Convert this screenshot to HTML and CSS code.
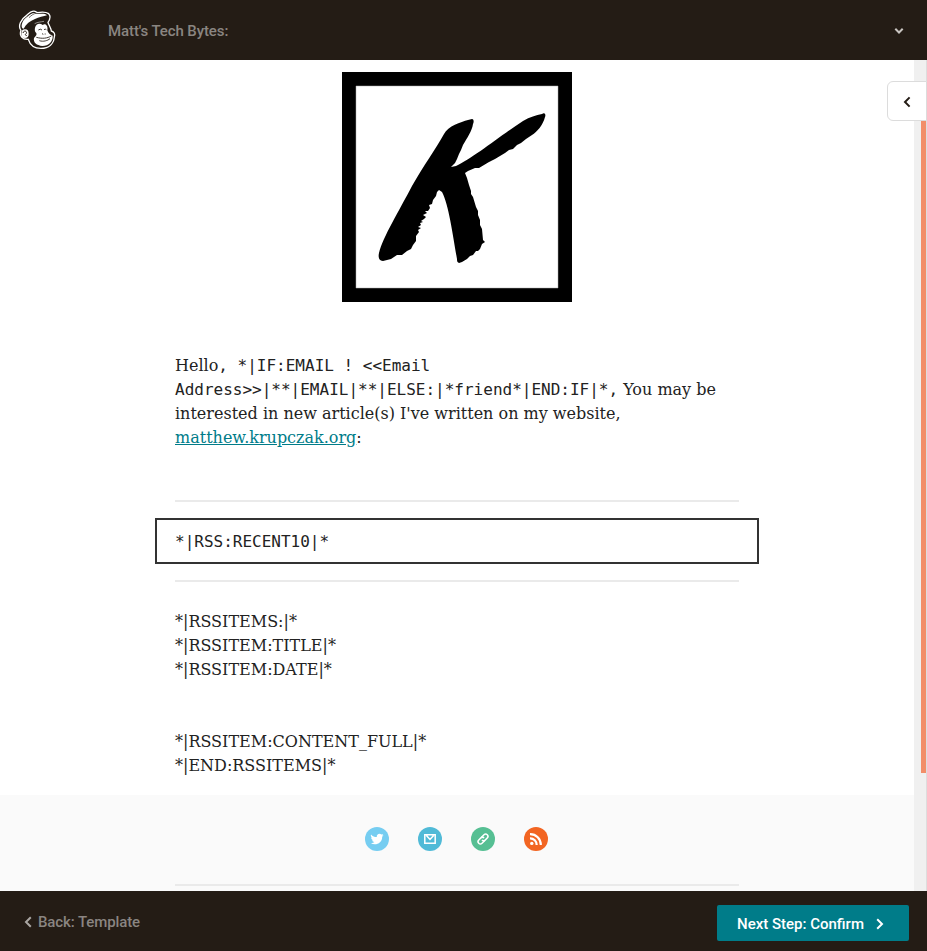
FILE: index.html
```html
<!DOCTYPE html>
<html lang="en">
<head>
<meta charset="utf-8">
<title>Matt's Tech Bytes</title>
<link rel="stylesheet" href="styles.css">
</head>
<body>
<header class="topbar">
  <svg class="logo" width="42" height="44" viewBox="0 0 126 132">
    <path d="M15 67C5 55 14 34 32 22C40 14 49 8 57 10L64 14C76 12 89 11 98 17C105 24 102 34 96 43C98 51 105 59 106 69C115 71 118 79 115 87C113 107 99 121 75 121C56 121 42 111 37 94C22 96 8 84 15 67Z" fill="#241c15" stroke="#fff" stroke-width="4"/>
    <path d="M19 61C13 51 22 33 36 25C44 17 55 12 63 18C75 17 87 15 93 22C83 25 68 27 57 33C42 39 30 48 23 62Z" fill="#fff"/>
    <path d="M39 29C46 22 53 17 60 16" fill="none" stroke="#241c15" stroke-width="2"/>
    <path d="M56 47C65 42 74 42 84 40" fill="none" stroke="#fff" stroke-width="1.5"/>
    <ellipse cx="27" cy="77" rx="11" ry="13" fill="#fff"/>
    <path d="M21 75C23 66 34 69 31 76L28 80L32 84" fill="none" stroke="#241c15" stroke-width="3"/>
    <path d="M57 59C60 46 72 44 80 51C88 45 97 53 94 67C98 78 103 80 110 83C111 101 99 113 79 114C62 112 51 104 54 90C60 83 64 79 60 74C56 70 56 65 57 59Z" fill="#fff"/>
    <path d="M67 66Q73 61 78 66M84 65Q88 62 91 65M78 77L82 79M86 78H89M61 88C80 93 93 91 106 84M70 98C82 102 95 98 102 92" fill="none" stroke="#241c15" stroke-width="2.6"/>
  </svg>
  <span class="campaign">Matt's Tech Bytes:</span>
  <svg class="menu" width="10" height="8" viewBox="0 0 10 8"><path d="M1.3 1.8L5 5.5L8.7 1.8"/></svg>
</header>
<main class="preview">
  <div class="mail">
    <svg class="brand" width="230" height="230" viewBox="0 0 230 230">
      <path fill="#000" d="M0 0H230V230H0Z"/><path fill="#fff" stroke="#aaa" stroke-width=".5" d="M14 14H216V216H14Z"/>
      <path d="M102 62C106 54 119 50 126 48L130 47C132 47 132 50 131 52C130 59 125 66 121 73L119 78L117 82L115 87L113 91L109 95L114 94C130 87 158 64 181 49C188 45 194 43 200 42C203 40 204 43 203 45C201 53 195 60 190 63L184 67L179 71L175 73L171 77L167 78L163 81L158 84L153 87L147 90L142 93L137 96H133L126 99L123 101L125 106L127 113L129 119V122L131 125L134 135L136 139V143L138 148V153L140 157L141 168L143 170L140 172L138 177L136 179H134L131 183L128 184L125 187L120 190L117 191C115 190 115 189 115 187C111 165 107 133 100 120L97 118L95 120L94 124L91 128L90 132L87 133L88 136L86 139H83L85 141L81 143L84 145L82 147L79 149L81 150L78 151L79 153L76 155L79 156L76 158L77 160L74 164V169L71 173L69 177L65 179L60 183H55L49 187L41 189C37 189 36 185 37 181C41 165 57 139 70 114C82 93 93 78 102 62Z"/>
    </svg>
    <p class="intro">Hello<code>, *|IF:EMAIL ! &lt;&lt;Email<br>Address&gt;&gt;|**|EMAIL|**|ELSE:|*friend*|END:IF|*,</code> You may be<br>interested in new article(s) I've written on my website,<br><a href="#">matthew.krupczak.org</a>:</p>
    <hr class="rule">
    <div class="block"><code>*|RSS:RECENT10|*</code></div>
    <hr class="rule">
    <p class="items">*|RSSITEMS:|*<br>*|RSSITEM:TITLE|*<br>*|RSSITEM:DATE|*<br><br><br>*|RSSITEM:CONTENT_FULL|*<br>*|END:RSSITEMS|*</p>
  </div>
  <section class="social">
    <div class="icons">
      <svg width="24" height="24" viewBox="0 0 24 24"><circle cx="12" cy="12" r="12" fill="#76cdf1"/><path fill="#fff" d="M6 7.5C7.7 9.3 9.5 10 11.8 10.1C11.2 7.2 14.7 5.8 16.4 7.6L18.2 7L17.1 8.6L18.5 8.2L17.2 9.7C17.3 16 10.7 19.1 5.8 16.2C7.4 16.3 8.5 15.8 9.4 15.1C8.2 15 7.4 14.3 7.1 13.3H8.2C6.9 12.8 6.2 11.9 6.2 10.6L7.3 10.9C6 9.9 5.5 8.8 6 7.5Z"/></svg>
      <svg width="24" height="24" viewBox="0 0 24 24"><circle cx="12" cy="12" r="12" fill="#50bad7"/><path d="M6.8 7.8H17.2V16.2H6.8ZM8.4 8.5L12 12.5L15.6 8.5" fill="none" stroke="#fff" stroke-width="1.5"/></svg>
      <svg width="24" height="24" viewBox="0 0 24 24"><circle cx="12" cy="12" r="12" fill="#56bf93"/><g transform="rotate(-45 12 12)" fill="none" stroke="#fff" stroke-width="1.5"><path d="M12.2 14.3H8.3A2.3 2.3 0 0 1 8.3 9.7H11.3A2.3 2.3 0 0 1 13.5 12"/><path d="M11.8 9.7H15.7A2.3 2.3 0 0 1 15.7 14.3H12.7A2.3 2.3 0 0 1 10.5 12"/></g></svg>
      <svg width="24" height="24" viewBox="0 0 24 24"><circle cx="12" cy="12" r="12" fill="#f26522"/><circle cx="7.8" cy="16.4" r="1.7" fill="#fff"/><path d="M6 11.3A6.5 6.5 0 0 1 12.7 18M6 7.2A10.6 10.6 0 0 1 16.8 18" fill="none" stroke="#fff" stroke-width="2.2"/></svg>
    </div>
    <hr class="rule">
  </section>
  <div class="gutter"><div class="thumb"></div></div>
  <button class="drawer" aria-label="Open panel"><svg width="8" height="12" viewBox="0 0 8 12"><path d="M6.6 1.4L2 6L6.6 10.6"/></svg></button>
</main>
<footer class="bottombar">
  <a class="back" href="#"><svg width="8" height="12" viewBox="0 0 8 12"><path d="M6.8 1.2L2 6L6.8 10.8"/></svg>Back: Template</a>
  <a class="next" href="#"><span class="label">Next Step: Confirm</span><svg width="8" height="12" viewBox="0 0 8 12"><path d="M1.2 1.2L6 6L1.2 10.8"/></svg></a>
</footer>
</body>
</html>
```
FILE: styles.css
```css
* { box-sizing: border-box; }
body { margin: 0; height: 951px; display: flex; flex-direction: column; overflow: hidden; background: #fff; color: #222; font: 16px/24px "DejaVu Serif", serif; }
svg { display: block; flex: none; }
.topbar { height: 60px; flex: none; display: flex; align-items: center; padding: 0 23px 0 16px; background: #241c15; font: 500 15px/20px Roboto, sans-serif; color: #8a8581; }
.campaign { margin: 2px 0 0 50px; width: 120px; white-space: nowrap; letter-spacing: -.1px; }
.menu { margin: 1px 0 0 auto; }
.menu path { fill: none; stroke: #c9c5c1; stroke-width: 2; }
.preview { position: relative; height: 831px; flex: none; display: flex; flex-direction: column; overflow: hidden; }
.mail { width: 564px; height: 735px; margin-left: 175px; padding-top: 12px; flex: none; }
.brand { margin-left: 167px; }
p { margin: 0; white-space: nowrap; }
code { font: 16px/24px "DejaVu Sans Mono", monospace; }
.intro { margin-top: 52px; height: 96px; }
.intro a { color: #007c89; text-decoration: underline; }
.rule { width: 564px; height: 2px; margin: 0; border: 0; background: #eaeaea; }
.intro + .rule { margin-top: 50px; }
.block { width: 604px; height: 46px; margin: 16px 0 16px -20px; padding: 10px 18px; border: 2px solid #333; }
.block code { display: block; }
.items { margin-top: 28px; }
.social { height: 96px; flex: none; padding: 32px 0 0 175px; background: #fafafa; }
.icons { display: flex; gap: 29px; padding-left: 190px; margin-bottom: 33px; }
.gutter { position: absolute; top: 0; right: 0; width: 13px; height: 831px; padding: 61px 0 0 7px; background: #f0f0f0; border-right: 1px solid #ddd; }
.thumb { width: 5px; height: 652px; background: #f28e69; }
.drawer { position: absolute; top: 21px; right: 0; width: 40px; height: 40px; padding: 2px 0 0 15px; border: 1px solid #dcdcdc; border-radius: 6px 0 0 6px; background: #fff; }
.drawer path { fill: none; stroke: #241c15; stroke-width: 2; }
.bottombar { height: 60px; flex: none; display: flex; justify-content: space-between; padding: 14px 18px 10px 24px; background: #241c15; font: 500 15px/20px Roboto, sans-serif; }
a { text-decoration: none; }
.back { display: flex; align-items: center; gap: 6px; height: 34px; color: #8a8581; white-space: nowrap; letter-spacing: -.1px; }
.back path { fill: none; stroke: #aaa6a2; stroke-width: 2; }
.next { display: flex; align-items: center; gap: 12px; width: 192px; height: 36px; padding: 1px 0 0 20px; border-radius: 2px; background: #007c89; color: #fff; white-space: nowrap; }
.label { width: 127px; padding-top: 1px; }
.next path { fill: none; stroke: #fff; stroke-width: 2; }
```
